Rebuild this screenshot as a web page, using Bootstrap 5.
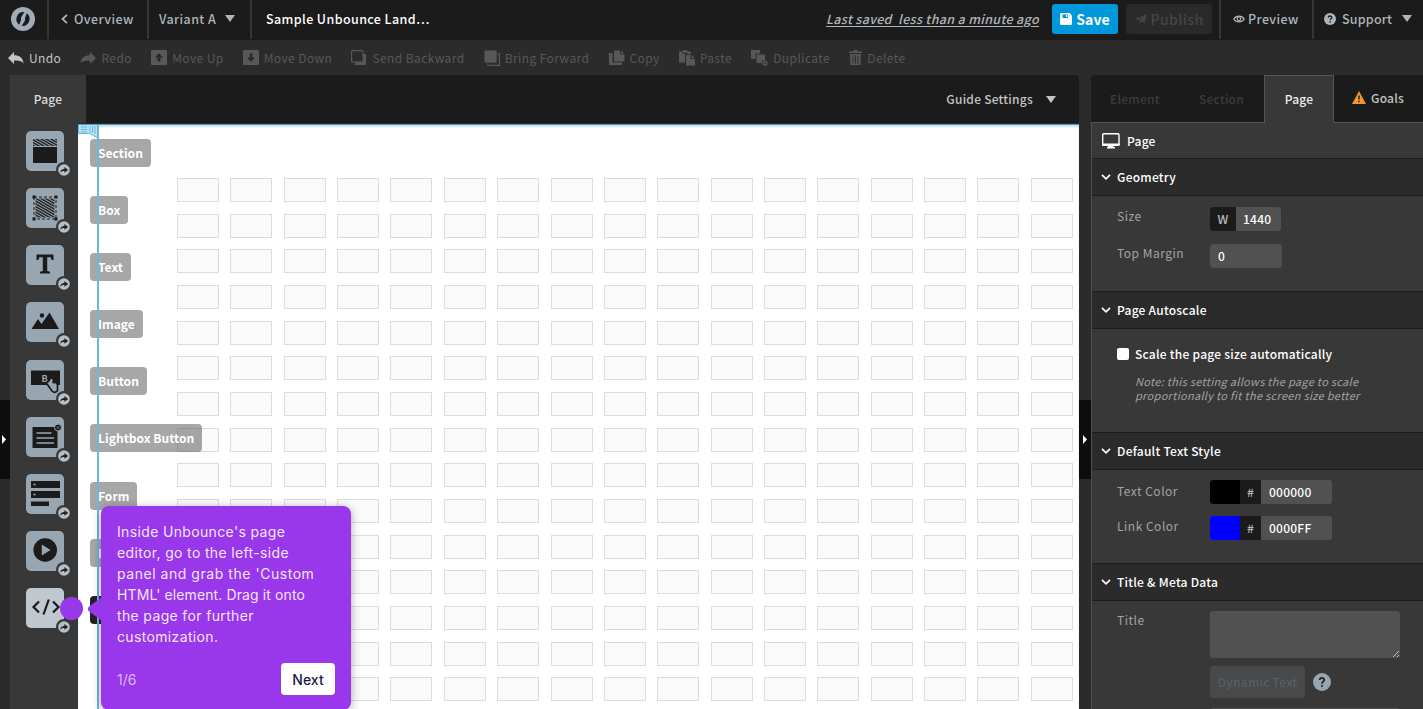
<!DOCTYPE html>
<html lang="en">
<head>
<meta charset="utf-8">
<title>Page editor</title>
<link href="https://cdn.jsdelivr.net/npm/bootstrap@5.3.0/dist/css/bootstrap.min.css" rel="stylesheet">
<style>
body{background:#2b2b2b;color:#c4c4c4;font:500 12px/18px "Noto Sans CJK JP",sans-serif;letter-spacing:.25px;height:709px;overflow:hidden}
svg{display:block;flex:none}
.topbar{height:40px;background:#1b1b1b;color:#aeb4ba;font-size:12.5px;letter-spacing:.4px}
.topbar .cell{height:39px;padding-bottom:2px;border-right:2px solid #353535;display:flex;align-items:center;flex:none}
.tri{width:0;height:0;border:5px solid transparent;border-top:7px solid currentColor;border-bottom:0}
.saved{font-style:italic;text-decoration:underline;text-underline-offset:2px;white-space:pre;letter-spacing:.33px}
.topbtn{height:30px;border-radius:3px;font-size:14px;font-weight:700;flex:none}
.save{width:66px;background:#0098db;color:#fff;letter-spacing:.1px}
.publish{width:86px;background:#2a2a2a;color:#454545;font-weight:500}
.tools{height:35px;color:#585858;padding-left:8px;gap:19.2px;font-weight:400;letter-spacing:.4px}
.tools .tool{display:flex;align-items:center;gap:5px;flex:none}
.main-row{height:634px}
.edge{width:10px}
.handle{height:79px;margin-top:325px;background:#0d0d0d;color:#fff}
.work{width:1069px}
.pagebar{height:48px;background:#1b1b1b;border-radius:0 4px 0 0}
.pagetab{width:76px;height:48px;background:#383838;color:#ddd}
.rail{width:68px;height:586px;background:#383838;padding:8px 0 0 16px}
.tile{width:38px;height:40px;border-radius:5px;background:#98a6b2;margin-bottom:17.15px;position:relative;color:#1b1b1b}
.tile>svg.art{width:38px;height:40px}
.tile>svg.go{position:absolute;left:30px;top:31px}
.tile.hot{background:#c0c8cf}
.sheet{width:1001px;height:585px;margin-top:1px;background:#fff;position:relative;border-top:1px solid #4a9cc0;box-shadow:inset 0 2px 2px #cfe3ee;overflow:hidden}
.cells{display:grid;grid-template-columns:repeat(17,42px);grid-auto-rows:24px;column-gap:11.36px;row-gap:11.67px;padding:53px 0 0 99px}
.cells i{border:1px solid #dcdcdc;background:#fafafa}
.guide{position:absolute;left:19px;top:0;width:1.5px;height:600px;background:#6ab8dc}
.corner{position:absolute;left:0;top:-1px}
.tag{position:absolute;left:12px;height:28px;padding:0 8px;border-radius:4px;background:rgba(60,60,60,.45);color:#fff;font-size:12.1px;font-weight:700;line-height:28px;letter-spacing:0}
.bubble{position:absolute;left:101px;top:506px;width:250px;height:204px;border-radius:8px;background:#9937eb;color:#f3e6ff;padding:15px 16px;font:400 14px/21px Inter,sans-serif;letter-spacing:.35px;box-shadow:0 2px 10px rgba(40,30,80,.4);white-space:nowrap}
.bubble .wide{letter-spacing:.54px}
.bubble .snug{letter-spacing:.11px}
.bubble .tip{position:absolute;left:-14px;top:91px}
.next{width:54px;height:32px;border-radius:4px;background:#fff;color:#1d1748;font-weight:500;letter-spacing:0}
.dot{position:absolute;left:60px;top:597px;width:23px;height:23px;border-radius:50%;background:#9937eb}
.gutter{width:12px}
.side{width:332px;height:634px;overflow:hidden}
.tabs{height:48px;background:#1b1b1b;border-bottom:1px solid #555;border-radius:4px 0 0 0}
.tabs .on{width:70px;height:48px;background:#383838;border:1px solid #555;border-bottom:0;color:#eee}
.panel{border-left:1px solid #505050;background:#383838;height:586px;color:#fff}
.sect{height:38px;background:#2b2b2b;border-top:1px solid #1c1c1c;border-bottom:1px solid #1c1c1c;padding:0 0 1px 9px;gap:6px;display:flex;align-items:center}
.lab{width:93px;color:#a3a3a3;font-weight:400;letter-spacing:.5px;flex:none}
.fld{background:#515151;border-radius:3px;height:24px;display:flex;align-items:center;overflow:hidden}
.dk{background:#1b1b1b;color:#bbb;height:100%;display:flex;align-items:center;justify-content:center}
.chk{width:12px;height:12px;background:#fff;border-radius:2px;flex:none}
.note{font-size:11px;line-height:14px;font-style:italic;font-weight:400;letter-spacing:.3px;color:#a3a3a3;white-space:nowrap}
</style>
</head>
<body>
<svg width="0" height="0" class="position-absolute"><defs>
<pattern id="hatch" width="2.4" height="2.4" patternUnits="userSpaceOnUse" patternTransform="rotate(-60)"><rect width="1.4" height="2.4" fill="#1b1b1b"/></pattern>
<symbol id="go" viewBox="0 0 16 16"><circle cx="8" cy="8" r="8" fill="#383838"/><circle cx="8" cy="8" r="5.8" fill="#b5bfc8"/><path d="M4 10.800C4.400 8.200 6 7 8.400 6.900V5.100L12.200 8 8.400 10.800V9.100C6.400 9 5.200 9.500 4 10.800Z" fill="#222"/></symbol>
<symbol id="reply" viewBox="0 0 16 14"><path d="M6 1v3.200c5 0 9 2 9.600 8.300C13.700 9.800 11 9.300 6 9.500V13L0 7Z" fill="currentColor"/></symbol>
<symbol id="chev" viewBox="0 0 10 6"><path d="M1 .9 5 4.800 9 .9" fill="none" stroke="#fff" stroke-width="1.700"/></symbol>
</defs></svg>

<header class="topbar d-flex">
 <div class="cell" style="width:49px;padding-left:10px"><svg width="26" height="26" viewBox="0 0 26 26"><circle cx="13" cy="13" r="12" fill="#a0adb9"/><path d="M14.300 6.200A7 7 0 0 0 9.300 18.800L11 14V11.500Z M11.700 19.800A7 7 0 0 0 16.700 7.200L15 12V14.500Z" fill="#1b1b1b"/><path d="M11.500 10 9 17.500M17 8.500 14.500 16" stroke="#a0adb9" stroke-width="0"/></svg></div>
 <div class="cell" style="width:100px;padding-left:12px;gap:6px"><svg width="7" height="10" viewBox="0 0 7 10"><path d="M6 .8 1.500 5 6 9.200" fill="none" stroke="currentColor" stroke-width="1.800"/></svg><span>Overview</span></div>
 <div class="cell" style="width:103px;padding-left:10px;gap:9px"><span>Variant A</span><b class="tri"></b></div>
 <div class="cell border-0" style="width:574px;padding-left:14px;color:#fff"><span>Sample Unbounce Land…</span></div>
 <div class="cell border-0" style="width:226px"><span class="saved">Last saved  less than a minute ago</span></div>
 <div class="topbtn save d-flex align-items-center justify-content-center mt-1 gap-1"><svg width="12" height="12" viewBox="0 0 12 12"><path d="M1.500 0H9.500L12 2.500V10.500Q12 12 10.500 12H1.500Q0 12 0 10.500V1.500Q0 0 1.500 0Z" fill="#fff"/><path d="M2.500 1.500H8V5H2.500Z" fill="#0098db"/><path d="M6 2H7.300V4H6Z" fill="#fff"/></svg><span>Save</span></div>
 <div class="topbtn publish d-flex align-items-center justify-content-center mt-1 ms-2 gap-1"><svg width="12" height="11" viewBox="0 0 12 11"><path d="M0 5 12 0 9.500 9 6.500 7.200 4.500 10V6.500L9 2.500 3.300 6Z" fill="currentColor"/></svg><span>Publish</span></div>
 <div class="cell" style="width:9px"></div>
 <div class="cell" style="width:93px;padding-left:12px;gap:3px"><svg width="12" height="10" viewBox="0 0 12 10"><path d="M.8 5C3 1.200 9 1.200 11.200 5 9 8.800 3 8.800.8 5Z" fill="none" stroke="currentColor" stroke-width="1.300"/><circle cx="6" cy="4.800" r="1.800" fill="none" stroke="currentColor" stroke-width="1.200"/></svg><span>Preview</span></div>
 <div class="cell border-0" style="padding-left:10px;gap:6px;letter-spacing:.2px"><svg width="12" height="12" viewBox="0 0 12 12"><circle cx="6" cy="6" r="6" fill="currentColor"/><path d="M4.200 4.600C4.300 2.400 7.900 2.500 7.800 4.600 7.700 5.800 6.100 5.700 6.100 7.100M6.100 8.100V9.500" fill="none" stroke="#1b1b1b" stroke-width="1.300"/></svg><span>Support</span><b class="tri" style="margin-left:4px"></b></div>
</header>

<nav class="tools d-flex align-items-center">
 <div class="tool" style="color:#c4c4c4"><svg width="16" height="14"><use href="#reply"/></svg><span>Undo</span></div>
 <div class="tool"><svg width="16" height="14" style="transform:scaleX(-1)"><use href="#reply"/></svg><span>Redo</span></div>
 <div class="tool"><svg width="16" height="15" viewBox="0 0 16 15"><rect width="16" height="15" rx="1" fill="currentColor"/><path d="M8 3 12 7.500H9.500V11.500H6.500V7.500H4Z" fill="#2b2b2b"/></svg><span>Move Up</span></div>
 <div class="tool"><svg width="16" height="15" viewBox="0 0 16 15"><rect width="16" height="15" rx="1" fill="currentColor"/><path d="M8 12 12 7.500H9.500V3.500H6.500V7.500H4Z" fill="#2b2b2b"/></svg><span>Move Down</span></div>
 <div class="tool"><svg width="16" height="16" viewBox="0 0 16 16"><path d="M4 4H15V15H4Z" fill="currentColor"/><rect x=".6" y=".6" width="11.500" height="11.500" rx="1" fill="#2b2b2b" stroke="currentColor" stroke-width="1.200"/></svg><span>Send Backward</span></div>
 <div class="tool"><svg width="16" height="16" viewBox="0 0 16 16"><rect x="4" y="4" width="11.400" height="11.400" fill="none" stroke="currentColor" stroke-width="1.200"/><rect x="0" y="0" width="13" height="13" rx="1" fill="currentColor" stroke="#2b2b2b" stroke-width=".8"/></svg><span>Bring Forward</span></div>
 <div class="tool"><svg width="16" height="16" viewBox="0 0 16 16"><path d="M0 3H3.500V12.500H13V15H0Z M5 .5H11V4.500H15.500V11.500H5Z M12 .5 15.500 3.500H12Z" fill="currentColor"/></svg><span>Copy</span></div>
 <div class="tool"><svg width="16" height="16" viewBox="0 0 16 16"><path d="M0 1.500H3L4.500 0H7.500L9 1.500H12V4H6V12.500H0Z M7 5H11.500V9H16V15.500H7Z M12.500 5 16 8H12.500Z" fill="currentColor"/><path d="M3 3.200H9" stroke="#2b2b2b"/></svg><span>Paste</span></div>
 <div class="tool"><svg width="17" height="16" viewBox="0 0 17 16"><path d="M0 0H9V3.500H4.500V9H0Z M5.500 4.500H14V10.500H11V13H5.500Z" fill="currentColor"/><circle cx="14" cy="13" r="2.600" fill="currentColor"/><path d="M14 11.800V14.200M12.800 13H15.200" stroke="#2b2b2b" stroke-width=".8"/></svg><span>Duplicate</span></div>
 <div class="tool"><svg width="13" height="15" viewBox="0 0 13 15"><path d="M0 1.500H4L5 0H8L9 1.500H13V3H0Z M1 4H12L11.500 15H1.500Z" fill="currentColor"/><path d="M4 5.500V13.500M6.500 5.500V13.500M9 5.500V13.500" stroke="#2b2b2b"/></svg><span>Delete</span></div>
</nav>

<main class="main-row d-flex">
 <div class="edge"><div class="handle d-flex align-items-center"><svg width="7" height="9" viewBox="0 0 7 9"><path d="M2 0 6 4.500 2 9Z" fill="#fff"/></svg></div></div>
 <div class="work">
  <div class="pagebar d-flex align-items-center"><div class="pagetab d-flex align-items-center justify-content-center"><span>Page</span></div><span class="ms-auto">Guide Settings</span><b class="tri" style="margin:1px 23px 0 13px;border-width:7px 5.500px 0"></b></div>
  <div class="d-flex">
   <div class="rail">
    <div class="tile"><svg class="art" viewBox="0 0 38 40"><rect x="7" y="8" width="24" height="7" fill="url(#hatch)"/><rect x="7" y="16" width="24" height="16" fill="#1b1b1b"/></svg><svg class="go" width="16" height="16"><use href="#go"/></svg></div>
    <div class="tile"><svg class="art" viewBox="0 0 38 40"><rect x="9.500" y="10.500" width="19" height="19" fill="url(#hatch)"/><rect x="8" y="9" width="22" height="22" fill="none" stroke="#1b1b1b" stroke-dasharray="3 2"/><path d="M6.500 7.500h3v3h-3zM28.500 7.500h3v3h-3zM6.500 29.500h3v3h-3zM28.500 29.500h3v3h-3z" fill="#1b1b1b"/></svg><svg class="go" width="16" height="16"><use href="#go"/></svg></div>
    <div class="tile"><svg class="art" viewBox="0 0 38 40"><path d="M10.500 9.500H27.500V15H25.500L24.700 12.300H21.200V26L24 26.800V28.500H14V26.800L16.800 26V12.300H13.300L12.500 15H10.500Z" fill="#1b1b1b"/></svg><svg class="go" width="16" height="16"><use href="#go"/></svg></div>
    <div class="tile"><svg class="art" viewBox="0 0 38 40"><path d="M5.500 27 12 17 15.500 22 23.500 10.500 33 27Z" fill="#1b1b1b"/><circle cx="16" cy="13.500" r="2.200" fill="#1b1b1b"/></svg><svg class="go" width="16" height="16"><use href="#go"/></svg></div>
    <div class="tile"><svg class="art" viewBox="0 0 38 40"><path d="M5 10.500H34V25H5Z" fill="#1b1b1b"/><text x="15.500" y="21.500" font-size="9" font-weight="700" letter-spacing="0" fill="#98a6b2">B</text><path d="M21 24 26 31Q29 34 31.500 30.500V24L26 22.500V18.500" fill="#98a6b2" stroke="#1b1b1b" stroke-width="1.700"/><path d="M25.500 19V24.500H30" fill="none" stroke="#98a6b2" stroke-width="1.800"/></svg><svg class="go" width="16" height="16"><use href="#go"/></svg></div>
    <div class="tile"><svg class="art" viewBox="0 0 38 40"><rect x="6.500" y="10" width="25" height="21" fill="#1b1b1b"/><path d="M10.500 16H25.500M10.500 21H28M10.500 26H28" stroke="#98a6b2" stroke-width="1.300"/><circle cx="32" cy="10.500" r="3.500" fill="#1b1b1b" stroke="#98a6b2"/><path d="M31 9.500 33 11.500M33 9.500 31 11.500" stroke="#98a6b2" stroke-width=".8"/></svg><svg class="go" width="16" height="16"><use href="#go"/></svg></div>
    <div class="tile"><svg class="art" viewBox="0 0 38 40"><path d="M5 7H34V14H5ZM5 17H34V24H5ZM5 27.500H23V32H5Z" fill="#1b1b1b"/><circle cx="8.500" cy="10.500" r="1.100" fill="#98a6b2"/><circle cx="8.500" cy="20.500" r="1.100" fill="#98a6b2"/></svg><svg class="go" width="16" height="16"><use href="#go"/></svg></div>
    <div class="tile"><svg class="art" viewBox="0 0 38 40"><circle cx="19.200" cy="19" r="11.800" fill="#1b1b1b"/><path d="M15.800 13.500 24.500 19 15.800 24.500Z" fill="#98a6b2"/></svg><svg class="go" width="16" height="16"><use href="#go"/></svg></div>
    <div class="tile hot"><svg class="art" viewBox="0 0 38 40"><path d="M13 13.500 7.500 19 13 24.500M27 13.500 32.500 19 27 24.500M22.800 11.500 17.500 26.500" fill="none" stroke="#1b1b1b" stroke-width="2.200"/></svg><svg class="go" width="16" height="16"><use href="#go"/></svg></div>
   </div>
   <div class="sheet">
    <div class="cells" id="cells"></div>
    <svg class="corner" width="21" height="15" viewBox="0 0 21 15"><path d="M.5.5H19.500V14L12 9.500H.5Z" fill="#b9e0f2" stroke="#6ab8dc"/><path d="M3 3H9M3 5.500H9M3 8H9M12 2V8M14.500 2V9M17 2V10" stroke="#6ab8dc"/></svg>
    <span class="tag" style="top:14px">Section</span><span class="tag" style="top:71px">Box</span><span class="tag" style="top:128px">Text</span><span class="tag" style="top:185px">Image</span><span class="tag" style="top:242px">Button</span><span class="tag" style="top:299px">Lightbox Button</span><span class="tag" style="top:357px">Form</span><span class="tag" style="top:414px">I</span><span class="tag" style="top:471px;width:60px;background:#222"></span>
    <div class="guide"></div>
   </div>
  </div>
 </div>
 <div class="gutter"><div class="handle d-flex align-items-center"><svg width="8" height="9" viewBox="0 0 8 9"><path d="M4 0 8 4.500 4 9Z" fill="#fff"/></svg></div></div>
 <aside class="side">
  <div class="tabs d-flex align-items-center" style="color:#3b3b3b"><span style="margin-left:19px;width:51px">Element</span><span style="margin-left:38px;width:47px">Section</span><div class="on d-flex align-items-center justify-content-center" style="margin-left:18px"><span>Page</span></div><svg width="14" height="13" viewBox="0 0 14 13" style="margin:-2px 0 0 18px"><path d="M7 0 14 13H0Z" fill="#f0962d"/><path d="M7 4.500V8.500M7 9.700V11.300" stroke="#2b2b2b" stroke-width="1.600"/></svg><span style="margin:-2px 0 0 5px;color:#c4c4c4">Goals</span></div>
  <div class="panel">
   <div class="d-flex align-items-center" style="height:35px;padding:1px 0 0 10px;gap:7px"><svg width="18" height="16" viewBox="0 0 18 16"><rect x=".7" y=".7" width="16.300" height="11.500" rx="1" fill="none" stroke="#fff" stroke-width="1.400"/><path d="M0 10.500H17.700V12.500H0ZM6 13H11.500V14H13V15.500H5V14H6Z" fill="#fff"/></svg><span>Page</span></div>
   <div class="sect"><svg width="10" height="6"><use href="#chev"/></svg><span>Geometry</span></div>
   <div style="height:95px;padding:11px 0 0 25px">
    <div class="d-flex"><span class="lab">Size</span><div class="fld" style="width:71px"><div class="dk" style="width:26px"><span>W</span></div><span style="margin-left:7px">1440</span></div></div>
    <div class="d-flex" style="margin-top:13px"><span class="lab">Top Margin</span><div class="fld" style="width:72px;padding-left:8px"><span>0</span></div></div>
   </div>
   <div class="sect"><svg width="10" height="6"><use href="#chev"/></svg><span>Page Autoscale</span></div>
   <div style="height:103px;padding:16px 0 0 25px"><div class="d-flex align-items-center" style="gap:6px"><i class="chk"></i><span>Scale the page size automatically</span></div><div class="note" style="margin:11px 0 0 18px"><span>Note: this setting allows the page to scale</span><br><span>proportionally to fit the screen size better</span></div></div>
   <div class="sect"><svg width="10" height="6"><use href="#chev"/></svg><span>Default Text Style</span></div>
   <div style="height:93px;padding:10px 0 0 25px">
    <div class="d-flex"><span class="lab" style="padding-top:2px">Text Color</span><div class="fld" style="width:122px"><div class="dk" style="width:30px;background:#000"></div><div class="dk" style="width:21px"><span>#</span></div><span style="margin-left:8px">000000</span></div></div>
    <div class="d-flex" style="margin-top:12px"><span class="lab" style="padding-top:1px">Link Color</span><div class="fld" style="width:122px"><div class="dk" style="width:30px;background:#00f"></div><div class="dk" style="width:21px"><span>#</span></div><span style="margin-left:8px">0000FF</span></div></div>
   </div>
   <div class="sect"><svg width="10" height="6"><use href="#chev"/></svg><span>Title &amp; Meta Data</span></div>
   <div class="d-flex" style="padding:10px 0 0 25px"><span class="lab">Title</span><div>
    <div class="fld align-items-end justify-content-end" style="width:190px;height:47px"><svg width="8" height="8" viewBox="0 0 8 8"><path d="M1 7 7 1M5 7 7 5" stroke="#bbb"/></svg></div>
    <div class="d-flex align-items-center" style="margin-top:8px;gap:8px"><div class="fld justify-content-center" style="width:95px;height:32px;background:#47494a;color:#5b5e60"><span>Dynamic Text</span></div><svg width="18" height="18" viewBox="0 0 18 18"><circle cx="9" cy="9" r="9" fill="#98a6b2"/><path d="M6.700 7C6.800 4.200 11.300 4.400 11.200 7 11.100 8.700 9 8.600 9 10.700M9 11.900V13.700" fill="none" stroke="#222" stroke-width="1.800"/></svg></div>
    <div class="fld" style="width:190px;margin-top:10px"></div></div></div>
  </div>
 </aside>
</main>
<div class="dot"></div>
<div class="bubble"><svg class="tip" width="15" height="24" viewBox="0 0 15 24"><path d="M15 0V24L1.500 14Q0 12 1.500 10Z" fill="#9937eb"/></svg>
 <div><span>Inside Unbounce's page</span><br><span>editor, go to the left-side</span><br><span class="wide">panel and grab the 'Custom</span><br><span class="snug">HTML' element. Drag it onto</span><br><span>the page for further</span><br><span>customization.</span></div>
 <div class="d-flex justify-content-between align-items-center" style="margin-top:16px"><span style="color:#dcb8fa;letter-spacing:0">1/6</span><div class="next d-flex align-items-center justify-content-center"><span>Next</span></div></div>
</div>
<script src="https://cdn.jsdelivr.net/npm/bootstrap@5.3.0/dist/js/bootstrap.bundle.min.js"></script>
<script>
document.getElementById('cells').innerHTML='<i></i>'.repeat(17*15);
</script>
</body>
</html>
